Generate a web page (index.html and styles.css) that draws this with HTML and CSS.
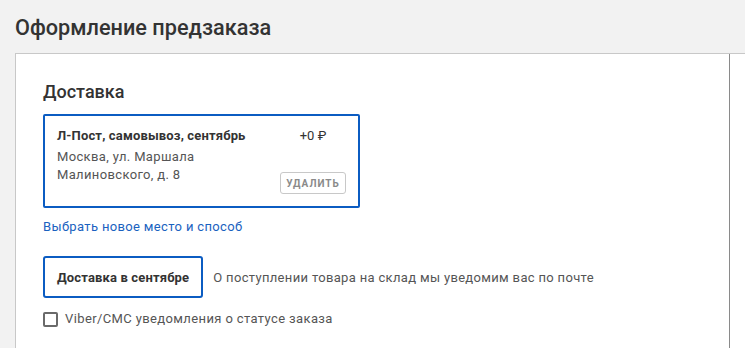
FILE: index.html
```html
<!DOCTYPE html>
<html lang="ru">
<head>
    <meta charset="UTF-8">
    <meta name="viewport" content="width=device-width, initial-scale=1.0">
    <title>Оформление предзаказа</title>
    <link rel="stylesheet" href="styles.css">
</head>
<body>

<div class="page-head">
    <h1>Оформление предзаказа</h1>
</div>

<div class="panel">
    <div class="main">
        <h2>Доставка</h2>

        <div class="card">
            <div class="card-name">Л-Пост, самовывоз, сентябрь</div>
            <div class="card-price">+0 ₽</div>
            <div class="card-address">Москва, ул. Маршала<br>Малиновского, д. 8</div>
            <button class="remove-btn">Удалить</button>
        </div>

        <a href="#" class="change-link">Выбрать новое место и способ</a>

        <div class="when-row">
            <div class="when-box">Доставка в сентябре</div>
            <div class="when-note">О поступлении товара на склад мы уведомим вас по почте</div>
        </div>

        <label class="check-row">
            <span class="check-box"></span>
            Viber/СМС уведомления о статусе заказа
        </label>
    </div>
    <div class="side"></div>
</div>

</body>
</html>
```

FILE: styles.css
```css
* {
    box-sizing: border-box;
}
body {
    margin: 0;
    background: #f2f2f2;
    font-family: Roboto, "Noto Sans", sans-serif;
    color: #333;
    height: 348px;
    overflow: hidden;
}
.page-head {
    height: 53px;
    padding: 15px 15px 0;
}
h1 {
    margin: 0;
    font-size: 21.7px;
    line-height: 25px;
    font-weight: 500;
    color: #333;
}
.panel {
    margin-left: 15px;
    display: flex;
    background: white;
    border-top: 1px solid #c8c8c8;
    border-left: 1px solid #c8c8c8;
    height: 295px;
}
.main {
    width: 714px;
    flex: none;
    border-right: 1px solid #8a8a8a;
    padding: 27px 27px 0;
}
.side { flex: 1; }
h2 {
    margin: 0 0 11px;
    font-size: 18px;
    line-height: 22px;
    font-weight: 500;
    color: #333;
}
.card {
    width: 317px;
    border: 2px solid #0b5cc2;
    border-radius: 2px;
    padding: 11px 12px 12px;
    display: grid;
    grid-template-columns: 1fr 66px;
    font-size: 13px;
    line-height: 18px;
}
.card-name {
    font-weight: 700;
    letter-spacing: 0.15px;
    color: #333;
}
.card-price {
    text-align: center;
    color: #333;
}
.card-address {
    margin: 3px 0 10px;
    letter-spacing: 0.35px;
    color: #555;
}
.remove-btn {
    align-self: end;
    height: 22px;
    padding: 0;
    background: white;
    border: 1px solid #c8c8c8;
    border-radius: 3px;
    font-family: inherit;
    font-size: 10px;
    font-weight: 700;
    letter-spacing: 1px;
    text-transform: uppercase;
    color: #8a8a8a;
}
.change-link {
    display: block;
    margin-top: 10px;
    font-size: 13px;
    line-height: 18px;
    letter-spacing: 0.35px;
    color: #1a62c0;
    text-decoration: none;
}
.when-row {
    margin-top: 20px;
    display: flex;
    align-items: center;
    gap: 10px;
}
.when-box {
    height: 42px;
    padding: 0 12px;
    display: flex;
    align-items: center;
    border: 2px solid #0b5cc2;
    border-radius: 3px;
    font-size: 13px;
    font-weight: 700;
    letter-spacing: 0.15px;
    color: #333;
}
.when-note {
    font-size: 13px;
    letter-spacing: 0.33px;
    color: #555;
}
.check-row {
    margin-top: 12px;
    display: flex;
    align-items: center;
    gap: 7px;
    font-size: 13px;
    line-height: 18px;
    letter-spacing: 0.38px;
    color: #555;
}
.check-box {
    width: 15px;
    height: 15px;
    border: 2px solid #6a6a6a;
    border-radius: 2px;
}
```
